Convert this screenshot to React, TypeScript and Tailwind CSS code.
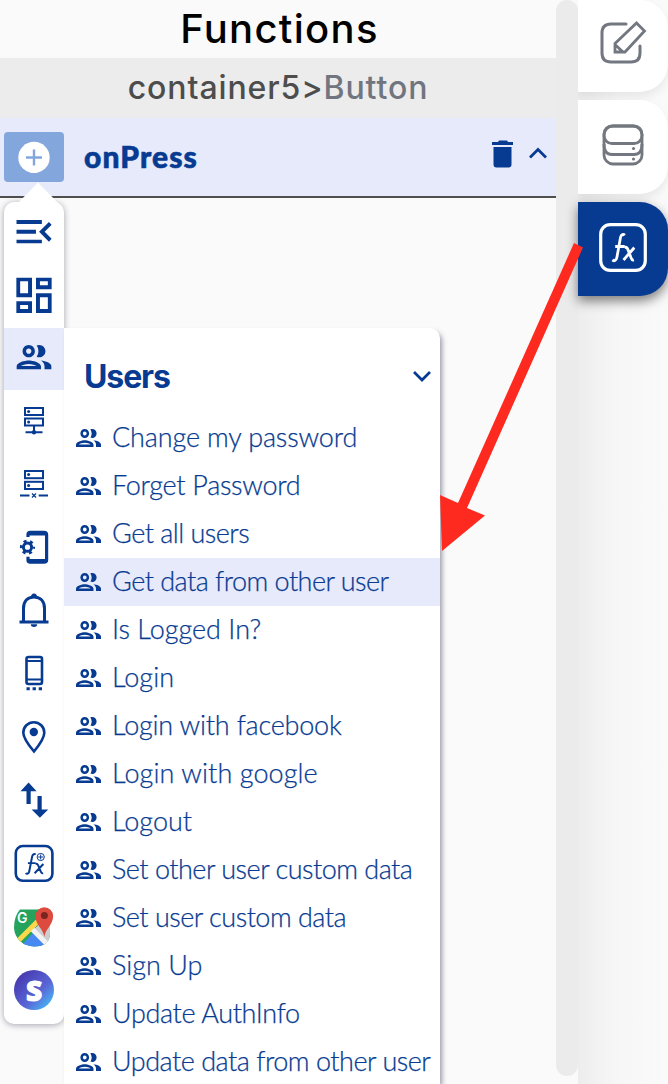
import React from 'react';

const PEOPLE =
  'M9 13.75c-2.34 0-7 1.17-7 3.5V19h14v-1.75c0-2.33-4.66-3.5-7-3.5zM4.34 17c.84-.58 2.87-1.25 4.66-1.25s3.82.67 4.66 1.25H4.34zM9 12c1.93 0 3.5-1.57 3.5-3.5S10.93 5 9 5 5.5 6.57 5.5 8.5 7.07 12 9 12zm0-5c.83 0 1.5.67 1.5 1.5S9.83 10 9 10s-1.5-.67-1.5-1.5S8.17 7 9 7zm7.04 6.81c1.16.84 1.96 1.96 1.96 3.44V19h4v-1.75c0-2.02-3.5-3.17-5.96-3.44zM15 12c1.93 0 3.5-1.57 3.5-3.5S16.93 5 15 5c-.54 0-1.04.13-1.5.35.63.89 1 1.98 1 3.15s-.37 2.26-1 3.15c.46.22.96.35 1.5.35z';

type SlotKind = 'top' | 'active' | 'rest';

const SLOT_CLASS: Record<SlotKind, string> = {
  top: 'flex h-[63px] items-center justify-center pb-[4px]',
  active: 'flex h-[62px] items-center justify-center bg-[#e7eafb] pb-[3px]',
  rest: 'flex flex-1 items-center justify-center pb-[4px]',
};

function Slot({ children, kind = 'rest' }: { children: React.ReactNode; kind?: SlotKind }) {
  return (
    <div className={SLOT_CLASS[kind]}>
      <svg width="40" height="40" viewBox="0 0 40 40" fill="none" stroke="none">
        {children}
      </svg>
    </div>
  );
}

function FxMark() {
  return (
    <>
      <path d="M12.6 1.4C11.4.1 9.3.6 8.6 3.2L5.2 20.6c-.6 3-2.7 3.6-4.2 2.2M3.6 11.2h9" />
      <path d="M12.4 12.2c2-.8 2.8.4 3.6 2.6l2.6 6.4c.6 1.6 1.4 2 2.6 1.6M21.6 12.2L11.4 23" />
    </>
  );
}

function Rail() {
  return (
    <nav className="absolute top-[202px] left-1 z-10 flex h-[822px] w-[60px] flex-col rounded-[10px] bg-white text-[#073b91] shadow-[0_1px_6px_rgba(40,40,70,0.42)]">
      <svg className="absolute -top-5 left-[13px]" width="42" height="22" viewBox="0 0 42 22">
        <path d="M0 22L21 0.5 42 22z" fill="#fff" />
      </svg>
      <Slot kind="top">
        <svg x="2.3" y="8" width="35.4" height="23.6" viewBox="3 6 18 12" fill="currentColor">
          <path d="M3 18h13v-2H3v2zM3 6v2h13V6H3zm0 7h10v-2H3v2zm18 2.59L17.42 12 21 8.41 19.59 7l-5 5 5 5L21 15.59z" />
        </svg>
      </Slot>
      <Slot kind="top">
        <svg x="2.2" y="2.4" width="35.6" height="35.6" viewBox="3 3 18 18" fill="currentColor">
          <path d="M19 5v2h-4V5h4M9 5v6H5V5h4m10 8v6h-4v-6h4M9 17v2H5v-2h4M21 3h-8v6h8V3zM11 3H3v10h8V3zm10 8h-8v10h8V11zm-10 4H3v6h8v-6z" />
        </svg>
      </Slot>
      <Slot kind="active">
        <svg x="2.4" y="7" width="35.2" height="24.6" viewBox="2 5 20 14" fill="currentColor">
          <path d={PEOPLE} />
        </svg>
      </Slot>
      <Slot>
        <g stroke="currentColor" strokeWidth="2">
          <rect x="11" y="8" width="18" height="7" />
          <rect x="11" y="18.5" width="18" height="7" />
          <path d="M20 26v7M11.5 32.3h17" />
        </g>
        <g fill="currentColor">
          <circle cx="14.6" cy="11.5" r="1.5" />
          <circle cx="14.6" cy="22" r="1.5" />
          <circle cx="20" cy="32.3" r="2.2" />
        </g>
      </Slot>
      <Slot>
        <g stroke="currentColor" strokeWidth="2">
          <rect x="11" y="8" width="18" height="7.2" />
          <rect x="11" y="18.8" width="18" height="7.2" />
          <path d="M6 32.5h9.5M24.7 32.5h9.3" />
          <path d="M18 30.5l4 4M22 30.5l-4 4" strokeWidth="1.3" />
        </g>
        <g fill="currentColor">
          <circle cx="14.6" cy="11.6" r="1.5" />
          <circle cx="14.6" cy="22.4" r="1.5" />
        </g>
      </Slot>
      <Slot>
        <path d="M14 10V7.5Q14 5.3 16.2 5.3H30Q32.6 5.3 32.6 7.5V33Q32.6 35.2 30 35.2H16.2Q14 35.2 14 33V29.8" stroke="currentColor" strokeWidth="3.2" />
        <path d="M13.5 7.2h19M13.5 33.2h19" stroke="currentColor" strokeWidth="2.6" />
        <g stroke="currentColor">
          <circle cx="13.5" cy="20.2" r="4.1" strokeWidth="3" />
          <circle cx="13.5" cy="20.2" r="6.3" strokeWidth="2.6" strokeDasharray="3 3.6" strokeDashoffset="1.5" />
        </g>
      </Slot>
      <Slot>
        <path d="M5.5 32H34.5M9.5 31V18.5C9.5 11.5 13.5 7 20 7s10.5 4.5 10.5 11.5V31" stroke="currentColor" strokeWidth="3" />
        <path d="M16.8 34.2h6.4a3.2 2.8 0 0 1-6.4 0z" fill="currentColor" />
        <path d="M17 7a3 3.5 0 0 1 6 0z" fill="currentColor" />
      </Slot>
      <Slot>
        <rect x="12.5" y="4" width="15.5" height="27" rx="2" stroke="currentColor" strokeWidth="2.6" />
        <path d="M12 8h17M12 26.5h17" stroke="currentColor" strokeWidth="2" />
        <path d="M12.5 35.8h3.3M18.6 35.8h3.3M24.7 35.8H28" stroke="currentColor" strokeWidth="3" />
      </Slot>
      <Slot>
        <path d="M20 34.5C12.5 25.5 9.3 20.5 9.3 15.7a10.5 10.5 0 0 1 21 0C30.3 20.5 27.3 25.5 20 34.5z" stroke="currentColor" strokeWidth="2.6" />
        <circle cx="19.8" cy="15" r="4.2" fill="currentColor" />
      </Slot>
      <Slot>
        <path d="M14.6 24V8M25.6 16v15" stroke="currentColor" strokeWidth="4.2" />
        <path d="M6.5 11.2L14.6 2.5l8 8.7zM17.6 29.5l8.3 8.3 8.3-8.3z" fill="currentColor" />
      </Slot>
      <Slot>
        <rect x="1.8" y="2" width="36.6" height="34.8" rx="7" stroke="currentColor" strokeWidth="2.6" />
        <g transform="translate(10.8 9.5) scale(.86)" stroke="currentColor" strokeWidth="2.3">
          <FxMark />
        </g>
        <g stroke="currentColor" strokeWidth="1">
          <circle cx="26.7" cy="13" r="3.6" />
          <path d="M26.7 10.5v5M24.2 13h5" />
        </g>
      </Slot>
      <Slot>
        <clipPath id="mapClip">
          <path d="M6 2.500H30Q36 2.500 36 9V26Q36 39.500 20 39.500A20 19.500 0 0 1 0 21Q0 9 6 2.500z" />
        </clipPath>
        <g clipPath="url(#mapClip)">
          <path d="M0 0h40v40H0z" fill="#25a35c" />
          <path d="M18 24L37 6v36z" fill="#ccced1" />
          <path d="M4 42L20 25l17 17z" fill="#4689f2" />
          <path d="M1 37L26 12" stroke="#fbd84b" strokeWidth="5" />
          <path d="M18.5 22.5L37 41" stroke="#f2f2f2" strokeWidth="5" />
        </g>
        <text x="3" y="16" fill="#fff" fontFamily="Inter, sans-serif" fontSize="14" fontWeight="600">G</text>
        <path d="M30.4 30C29.5 22 21.5 18.5 21.5 9a8.8 8.8 0 0 1 17.6 0c0 9-8 13-8.7 21z" fill="#dc4b3e" />
        <circle cx="30.4" cy="8.5" r="3.5" fill="#7b2521" />
      </Slot>
      <Slot>
        <defs>
          <linearGradient id="sBlue" x1="0" y1="0" x2="1" y2="1">
            <stop offset="0.1" stopColor="#4736ae" />
            <stop offset="0.6" stopColor="#5967d6" />
            <stop offset="1" stopColor="#3fd2ff" />
          </linearGradient>
        </defs>
        <circle cx="20" cy="20" r="20" fill="url(#sBlue)" />
        <text x="20" y="30.5" textAnchor="middle" fill="#fff" stroke="#fff" strokeWidth="1" fontFamily="'Open Sans', sans-serif" fontSize="28" fontWeight="800">S</text>
      </Slot>
    </nav>
  );
}

const ITEMS: [string, string][] = [
  ['Change my password', 'tracking-[-0.15px]'],
  ['Forget Password', 'tracking-[-0.3px]'],
  ['Get all users', 'tracking-[-0.52px]'],
  ['Get data from other user', 'tracking-[-0.52px]'],
  ['Is Logged In?', 'tracking-[0px]'],
  ['Login', 'tracking-[0px]'],
  ['Login with facebook', 'tracking-[-0.2px]'],
  ['Login with google', 'tracking-[0.08px]'],
  ['Logout', 'tracking-[0px]'],
  ['Set other user custom data', 'tracking-[-0.5px]'],
  ['Set user custom data', 'tracking-[-0.5px]'],
  ['Sign Up', 'tracking-[0px]'],
  ['Update AuthInfo', 'tracking-[-0.35px]'],
  ['Update data from other user', 'tracking-[-0.48px]'],
];

function UsersMenu() {
  return (
    <section className="absolute top-[328px] left-16 z-20 h-[756px] w-[376px] rounded-tr-[10px] bg-white text-[#073b91] shadow-[3px_3px_5px_-1px_rgba(60,60,90,0.5)]">
      <header className="flex h-[86px] items-center justify-between pt-[11px] pr-[9px] pl-[20px]">
        <h2 className="font-['Inter',sans-serif] text-[32px] font-bold tracking-[-1.1px]">Users</h2>
        <svg width="18" height="12" viewBox="0 0 18 12" fill="none" stroke="currentColor" strokeWidth="2.7">
          <path d="M1 1l8 8 8-8" />
        </svg>
      </header>
      <ul>
        {ITEMS.map(([label, tracking], i) => (
          <li key={label} className={i === 3 ? 'flex h-12 items-center bg-[#e7eafb] pl-[11.5px]' : 'flex h-12 items-center pl-[11.5px]'}>
            <svg className="mr-[11.5px] shrink-0" width="25" height="18" viewBox="2 5 20 14" preserveAspectRatio="none" fill="currentColor">
              <path d={PEOPLE} />
            </svg>
            <span className={`pb-1 font-['Lato',sans-serif] text-[27px] leading-none font-light whitespace-nowrap [-webkit-text-stroke:0.25px_#073b91] ${tracking}`}>{label}</span>
          </li>
        ))}
      </ul>
    </section>
  );
}

export default function App() {
  return (
    <div className="relative flex h-[1084px] w-[668px] overflow-hidden bg-[#fafafa]">
      <main className="flex w-[556px] flex-col">
        <h1 className="flex h-[58px] items-center justify-center pl-[3px] font-['Inter',sans-serif] text-[40px] font-medium tracking-[1.3px] text-black">Functions</h1>
        <div className="flex h-[60px] items-center justify-center bg-[#ececec] font-['Inter',sans-serif] text-[32px] font-medium tracking-[0.9px] text-[#4d4d4d]">
          container5&gt;<span className="text-[#707580]">Button</span>
        </div>
        <div className="flex h-20 items-center border-b-2 border-[#4f4f4f] bg-[#e7eafb] pl-1 text-[#073b91]">
          <button className="flex h-[50px] w-[60px] items-center justify-center rounded bg-[#83a6dd]">
            <svg width="32" height="32" viewBox="0 0 32 32" fill="none">
              <circle cx="16" cy="16.5" r="15.7" fill="#fff" />
              <path d="M16 8.5v16M8 16.5h16" stroke="#83a6dd" strokeWidth="2.4" />
            </svg>
          </button>
          <span className="ml-5 flex-1 pb-[2px] font-['Lato',sans-serif] text-[30px] font-black tracking-[1.1px] [-webkit-text-stroke:0.6px_#073b91]">onPress</span>
          <svg className="mb-[6px]" width="22" height="28" viewBox="0 0 22 28" fill="currentColor">
            <path d="M0 2h6l1-1.5h8L16 2h5v3H0zM1.5 7h18v17.5q0 3-3 3h-12q-3 0-3-3z" />
          </svg>
          <svg className="mr-[9px] mb-[9px] ml-[15px]" width="18" height="12" viewBox="0 0 18 12" fill="none" stroke="currentColor" strokeWidth="2.7">
            <path d="M1 10.5l8-8 8 8" />
          </svg>
        </div>
      </main>

      <div className="z-10 h-[1076px] w-[22px] rounded-[11px] bg-[#ebebeb]" />

      <aside className="flex w-[90px] flex-col gap-2 bg-linear-to-r from-[#ededed] via-[#f7f7f7] via-45% to-[#fafafa] text-[#727780]">
        <div className="flex h-[92px] items-center justify-center rounded-r-[28px] bg-white pb-[6px] shadow-[0_5px_10px_rgba(0,0,0,0.07)]">
          <svg width="48" height="44" viewBox="0 0 48 44" fill="none" stroke="currentColor" strokeWidth="3">
            <path d="M27 3H12Q3 3 3 12v20q0 9 9 9h20q9 0 9-9V25" strokeLinecap="round" />
            <path d="M16 22.5L37.5 2l8 8-19.5 21H16zM16.5 24l7.500 7" strokeWidth="2.8" />
          </svg>
        </div>
        <div className="flex h-[94px] items-center justify-center rounded-r-[28px] bg-white pb-[4px] shadow-[0_5px_10px_rgba(0,0,0,0.07)]">
          <svg width="42" height="42" viewBox="0 0 42 42" fill="none" stroke="currentColor" strokeWidth="2.8">
            <rect x="2" y="2" width="38" height="38" rx="9" />
            <rect x="2" y="2" width="38" height="17.5" rx="8" />
            <path d="M2 20q0 10.500 8 10.500h22q8 0 8-10.500" />
            <circle cx="31.500" cy="24.5" r="1.600" fill="currentColor" stroke="none" />
            <circle cx="31.500" cy="35" r="1.600" fill="currentColor" stroke="none" />
          </svg>
        </div>
        <div className="z-20 flex h-[94px] items-center justify-center rounded-r-[28px] bg-[#073b91] pb-[4px] text-white shadow-[0_5px_12px_rgba(0,0,0,0.5)]">
          <svg width="48" height="49" viewBox="0 0 48 49" fill="none" stroke="currentColor">
            <rect x="1.7" y="1.7" width="44.6" height="45.6" rx="9.5" strokeWidth="3.2" />
            <g transform="translate(12.4 10.6) scale(1.06 1.15)" strokeWidth="2.6">
              <FxMark />
            </g>
          </svg>
        </div>
      </aside>

      <Rail />
      <UsersMenu />

      <svg className="pointer-events-none absolute top-[240px] left-[436px] z-30" width="150" height="316" viewBox="436 240 150 316">
        <path d="M574 243L583 247.5 467 508 485 515.5 442 551 440 495 458 503z" fill="#ff2a1f" />
      </svg>
    </div>
  );
}
